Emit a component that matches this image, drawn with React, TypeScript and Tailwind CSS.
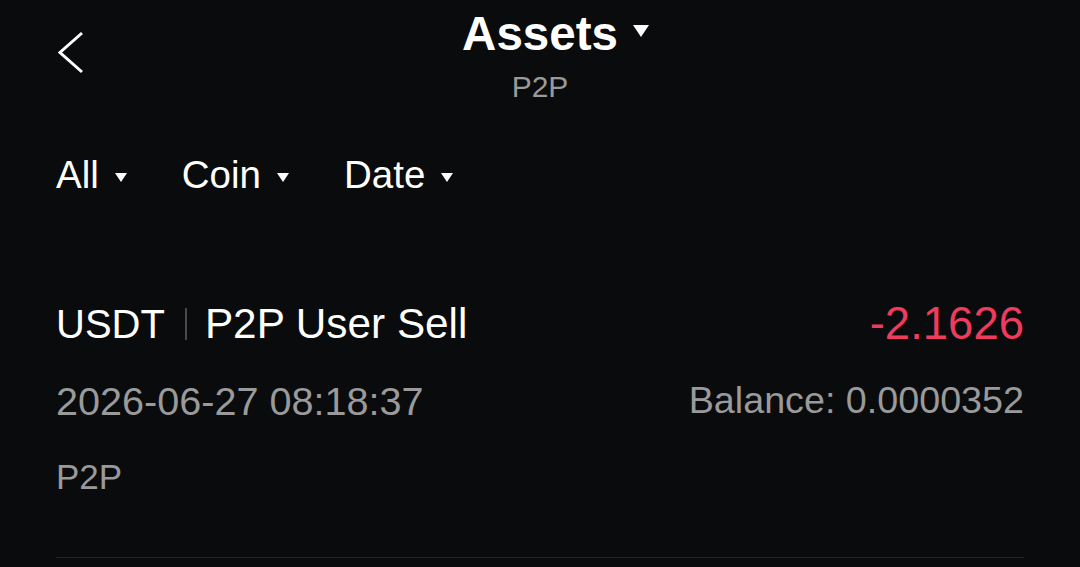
import React from 'react';

const Caret = ({ className }: { className: string }) => (
  <svg viewBox="0 0 12 9" className={className} fill="currentColor">
    <path d="M0 0 H12 L6 9 Z" />
  </svg>
);

const filters = ['All', 'Coin', 'Date'];

export default function App() {
  return (
    <div className="w-[1080px] h-[567px] overflow-hidden bg-[#0a0b0c] text-white font-['Liberation_Sans',Arial,sans-serif]">
      {/* Header */}
      <header className="grid grid-cols-[1fr_auto_1fr] pt-[10px]">
        <div className="pl-[58px] pt-[21px]">
          <svg width="26" height="44" viewBox="0 0 26 44" fill="none">
            <path d="M24 2 L2 21.5 L24 41" stroke="white" strokeWidth="3" />
          </svg>
        </div>
        <div className="flex flex-col items-center">
          <div className="relative">
            <span className="block text-[47.5px] leading-none font-bold">Assets</span>
            <Caret className="absolute left-[calc(100%+14px)] top-[15px] w-[18px] h-[12px]" />
          </div>
          <span className="mt-[14.5px] text-[30px] leading-none text-[#9a9a9a]">P2P</span>
        </div>
        <div />
      </header>

      {/* Filters */}
      <div className="mt-[54px] flex items-center gap-[55px] px-[56px]">
        {filters.map((f) => (
          <button key={f} className="flex items-center gap-[16px]">
            <span className="text-[38.5px] leading-none">{f}</span>
            <Caret className="mt-[4px] w-[12px] h-[9px]" />
          </button>
        ))}
      </div>

      {/* Record */}
      <div className="mt-[108px] px-[56px]">
        <div className="flex items-center justify-between">
          <div className="flex items-center">
            <span className="text-[40px] leading-[42px]">USDT</span>
            <span className="ml-[20px] mr-[18px] w-[2px] h-[32px] bg-[#4a4a4a]" />
            <span className="text-[42.3px] leading-[42px]">P2P User Sell</span>
          </div>
          <span className="text-[45.5px] leading-[42px] text-[#ee3b5e]">-2.1626</span>
        </div>
        <div className="mt-[37px] flex items-center justify-between leading-none text-[#9a9a9a]">
          <span className="text-[39.6px]">2026-06-27 08:18:37</span>
          <span className="text-[37.7px]">Balance: 0.0000352</span>
        </div>
        <div className="mt-[37.5px] text-[35px] leading-none text-[#9a9a9a]">P2P</div>
        <div className="mt-[63.5px] h-px bg-[#262626]" />
      </div>
    </div>
  );
}
